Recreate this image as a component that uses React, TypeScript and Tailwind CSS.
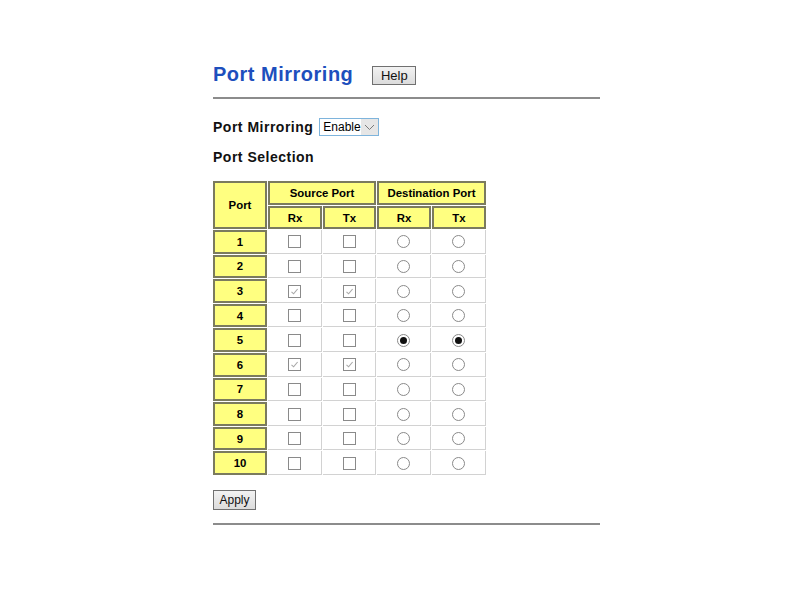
import React from "react";

const ports = [1, 2, 3, 4, 5, 6, 7, 8, 9, 10];
const srcChecked = [3, 6];
const dstChecked = 5;

function Box({ checked }: { checked: boolean }) {
  return (
    <span className="inline-flex items-center justify-center w-[13px] h-[13px] border border-[#8a8a8a] bg-white align-middle">
      {checked && (
        <svg width="9" height="9" viewBox="0 0 9 9">
          <path d="M1.5 4.8 L3.6 6.8 L7.6 2" fill="none" stroke="#a8a8a8" strokeWidth="1.1" />
        </svg>
      )}
    </span>
  );
}

function Radio({ checked }: { checked: boolean }) {
  return (
    <span className="inline-flex items-center justify-center w-[13px] h-[13px] rounded-full border border-[#8a8a8a] bg-white align-middle">
      {checked && <span className="w-[7px] h-[7px] rounded-full bg-[#111]" />}
    </span>
  );
}

const yellow = "bg-[#ffff80] border-2 border-[#7b7b5e] text-[11.4px] font-bold text-black text-center p-0";
const cell = "bg-white border-r border-b border-[#d2d2d2] text-center p-0";

export default function App() {
  return (
    <div className="min-h-[600px] bg-white pl-[213px] pt-[60px]" style={{ fontFamily: '"Liberation Sans", Arial, sans-serif' }}>
      <div className="w-[387px]">
        {/* Title */}
        <div className="flex items-center h-[28px]">
          <h1 className="text-[20px] font-bold text-[#1d4fbd] tracking-[0.5px]">Port Mirroring</h1>
          <button className="ml-[19px] mt-[2px] h-[19px] w-[44px] border border-[#707070] bg-gradient-to-b from-[#f2f2f2] to-[#dcdcdc] text-[13px] text-[#111] leading-none">
            Help
          </button>
        </div>
        <div className="mt-[9px] h-[2px] bg-[#8c8c8c]" />

        {/* Mode */}
        <div className="flex items-center mt-[19px] h-[18px]">
          <span className="text-[14px] font-bold tracking-[0.5px] text-[#111]">Port Mirroring</span>
          <div className="ml-[6px] flex items-center h-[18px] w-[60px] border border-[#7eb4dc] bg-white">
            <span className="pl-[3px] text-[12px] text-black flex-1">Enable</span>
            <span className="w-[17px] h-full flex items-center justify-center bg-[#e6e6e6]">
              <svg width="11" height="7" viewBox="0 0 11 7">
                <path d="M1 1 L5.5 5.5 L10 1" fill="none" stroke="#7a7a7a" strokeWidth="1" />
              </svg>
            </span>
          </div>
        </div>
        <div className="mt-[12px] text-[14px] font-bold tracking-[0.5px] text-[#111] h-[18px] flex items-center">Port Selection</div>

        {/* Table */}
        <table className="mt-[14px] border-separate border-spacing-[1px] -ml-[1px] leading-[14px]">
          <thead>
            <tr className="h-[24px]">
              <th rowSpan={2} className={`${yellow} w-[54px]`}>Port</th>
              <th colSpan={2} className={yellow}>Source Port</th>
              <th colSpan={2} className={yellow}>Destination Port</th>
            </tr>
            <tr className="h-[23px]">
              <th className={`${yellow} w-[54px]`}>Rx</th>
              <th className={`${yellow} w-[53px]`}>Tx</th>
              <th className={`${yellow} w-[54px]`}>Rx</th>
              <th className={`${yellow} w-[54px]`}>Tx</th>
            </tr>
          </thead>
          <tbody>
            {ports.map((p) => (
              <tr key={p} className="h-[23.6px]">
                <td className={yellow}>{p}</td>
                <td className={cell}><Box checked={srcChecked.includes(p)} /></td>
                <td className={cell}><Box checked={srcChecked.includes(p)} /></td>
                <td className={cell}><Radio checked={p === dstChecked} /></td>
                <td className={cell}><Radio checked={p === dstChecked} /></td>
              </tr>
            ))}
          </tbody>
        </table>

        <button className="mt-[14px] h-[20px] w-[43px] border border-[#707070] bg-gradient-to-b from-[#f2f2f2] to-[#dcdcdc] text-[12px] text-[#111] leading-none">
          Apply
        </button>
        <div className="mt-[12px] h-[2px] bg-[#8c8c8c]" />
      </div>
    </div>
  );
}
